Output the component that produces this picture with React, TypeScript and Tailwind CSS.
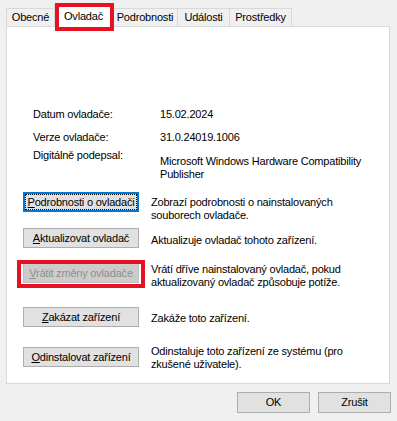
import React from "react";

const font = { fontFamily: '"Liberation Sans", Arial, sans-serif' };

function Tab({ label, width, last }: { label: string; width: string; last?: boolean }) {
  return (
    <div
      className={`${width} h-[18px] flex items-center justify-center border-t border-l border-[#d9d9d9] bg-[#f0f0f0] ${last ? "border-r" : ""}`}
    >
      {label}
    </div>
  );
}

function Btn({
  children,
  disabled,
  focused,
  className = "",
}: {
  children: React.ReactNode;
  disabled?: boolean;
  focused?: boolean;
  className?: string;
}) {
  if (focused) {
    return (
      <div
        className={`w-[116px] h-[20px] p-[1px] border border-[#0078d7] shadow-[inset_0_0_0_1px_#0078d7] bg-[#e1e1e1] ${className}`}
      >
        <div className="h-full flex items-center justify-center border border-dotted border-black">
          {children}
        </div>
      </div>
    );
  }
  return (
    <div
      className={`w-[116px] h-[20px] flex items-center justify-center border ${disabled ? "bg-[#cccccc] border-[#bfbfbf] text-[#8f8f8f]" : "bg-[#e1e1e1] border-[#adadad] text-black"} ${className}`}
    >
      {children}
    </div>
  );
}

export default function App() {
  return (
    <div
      className="w-[397px] h-[421px] bg-[#f0f0f0] text-[11px] leading-[13px] tracking-[-0.2px] text-black overflow-hidden"
      style={font}
    >
      {/* tabs */}
      <div className="flex items-end h-[26px] pl-[6px]">
        <Tab label="Obecné" width="w-[48px]" />
        <div className="relative z-10 w-[58px] h-[23px] -mb-px flex items-center justify-center bg-white border-t border-l border-[#d9d9d9]">
          Ovladač
          <div className="absolute left-0 top-[-2px] w-[59px] h-[28px] border-4 border-[#e81123]" />
        </div>
        <Tab label="Podrobnosti" width="w-[65px]" />
        <Tab label="Události" width="w-[52px]" />
        <Tab label="Prostředky" width="w-[63px]" last />
      </div>

      {/* panel */}
      <div className="ml-[6px] w-[384px] h-[358px] bg-white border border-[#d9d9d9] flex flex-col">
        <div className="mt-[81px] pl-[26px] flex">
          <div className="w-[127px]">Datum ovladače:</div>
          <div>15.02.2024</div>
        </div>
        <div className="mt-[10px] pl-[26px] flex">
          <div className="w-[127px]">Verze ovladače:</div>
          <div>31.0.24019.1006</div>
        </div>
        <div className="mt-[5px] pl-[26px] flex">
          <div className="w-[127px]">Digitálně podepsal:</div>
          <div className="mt-[6px]">
            Microsoft Windows Hardware Compatibility
            <br />
            Publisher
          </div>
        </div>

        <div className="mt-[11px] pl-[16px] flex items-start gap-[12px]">
          <Btn focused>
            <span>
              <u className="underline-offset-1">P</u>odrobnosti o ovladači
            </span>
          </Btn>
          <div className="mt-[4px]">
            Zobrazí podrobnosti o nainstalovaných
            <br />
            souborech ovladače.
          </div>
        </div>

        <div className="mt-[6px] pl-[16px] flex items-start gap-[12px]">
          <Btn>
            <span>
              <u className="underline-offset-1">A</u>ktualizovat ovladač
            </span>
          </Btn>
          <div className="mt-[6px]">Aktualizuje ovladač tohoto zařízení.</div>
        </div>

        <div className="mt-[15px] pl-[16px] flex items-start gap-[12px]">
          <div className="relative">
            <Btn disabled>
              <span>
                <u className="underline-offset-1">V</u>rátit změny ovladače
              </span>
            </Btn>
            <div className="absolute left-[-6px] top-[-3px] w-[128px] h-[28px] border-4 border-[#e81123]" />
          </div>
          <div>
            Vrátí dříve nainstalovaný ovladač, pokud
            <br />
            aktualizovaný ovladač způsobuje potíže.
          </div>
        </div>

        <div className="mt-[18px] pl-[16px] flex items-start gap-[12px]">
          <Btn>
            <span>
              <u className="underline-offset-1">Z</u>akázat zařízení
            </span>
          </Btn>
          <div className="mt-[5px]">Zakáže toto zařízení.</div>
        </div>

        <div className="mt-[18px] pl-[16px] flex items-start gap-[12px]">
          <Btn className="mt-[2px]">
            <span>
              <u className="underline-offset-1">O</u>dinstalovat zařízení
            </span>
          </Btn>
          <div>
            Odinstaluje toto zařízení ze systému (pro
            <br />
            zkušené uživatele).
          </div>
        </div>
      </div>

      {/* footer */}
      <div className="mt-[8px] pl-[237px] flex gap-[8px]">
        <div className="w-[73px] h-[21px] flex items-center justify-center bg-[#e1e1e1] border border-[#adadad]">
          OK
        </div>
        <div className="w-[73px] h-[21px] flex items-center justify-center bg-[#e1e1e1] border border-[#adadad]">
          Zrušit
        </div>
      </div>
    </div>
  );
}
